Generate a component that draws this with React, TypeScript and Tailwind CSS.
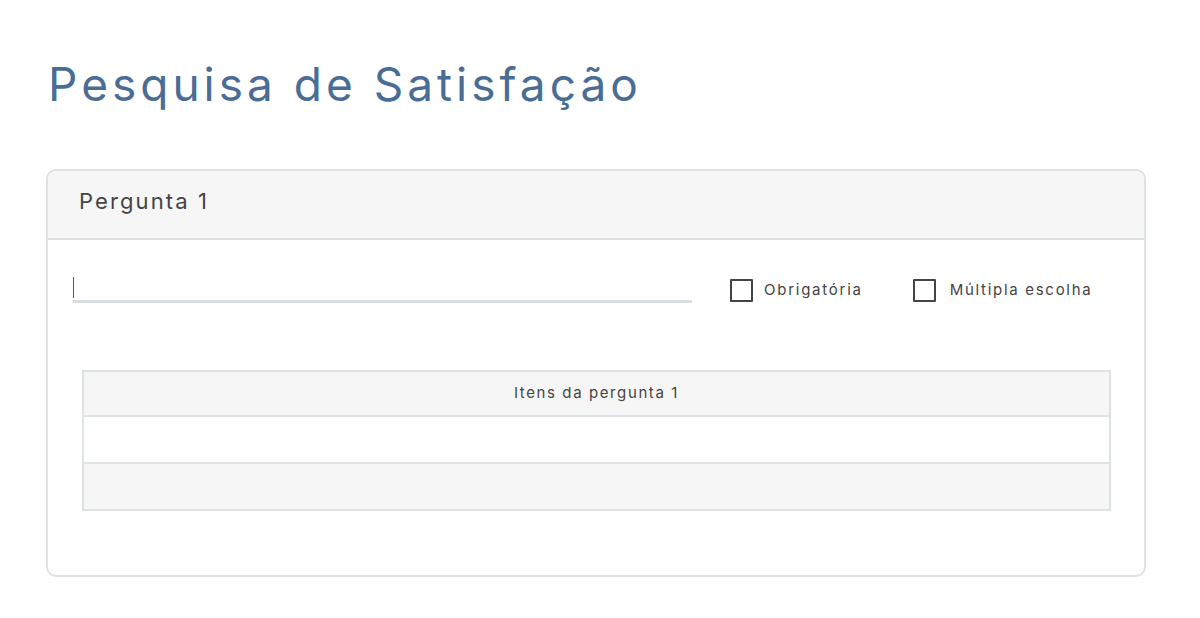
export default function App() {
  return (
    <div className="w-[1200px] h-[618px] bg-white font-['Inter','Noto_Sans',sans-serif] text-[#444]">
      <div className="pl-[48px] pr-[54px] pt-[52px]">
        {/* Title */}
        <h1 className="text-[46px] leading-[64px] text-[#4a6d96] tracking-[4px] font-normal">
          Pesquisa de Satisfação
        </h1>

        {/* Card */}
        <div className="mt-[53px] -ml-[2px] w-[1100px] h-[408px] border-2 border-[#dde2e5] rounded-[10px] overflow-hidden">
          <div className="h-[69px] bg-[#f6f6f6] border-b-2 border-[#dde2e5] flex items-center pl-[31px] pb-[6px]">
            <span className="text-[22px] tracking-[2.1px] text-[#444]">Pergunta 1</span>
          </div>

          <div className="px-[25px] pt-[34px]">
            <div className="flex items-start">
              <div className="w-[619px] h-[29px] border-b-[3px] border-[#d8dfe3] pt-[3px]">
                <div className="w-px h-[21px] bg-[#555]" />
              </div>

              <label className="ml-[38px] flex items-center gap-[11px] mt-[5px]">
                <span className="w-[23px] h-[23px] border-2 border-[#444] rounded-[1px]" />
                <span className="text-[15px] tracking-[1.75px]">Obrigatória</span>
              </label>

              <label className="ml-[50px] flex items-center gap-[14px] mt-[5px]">
                <span className="w-[23px] h-[23px] border-2 border-[#444] rounded-[1px]" />
                <span className="text-[15px] tracking-[1.7px]">Múltipla escolha</span>
              </label>
            </div>

            {/* Items table */}
            <div className="mt-[67px] ml-[9px] w-[1029px] border-2 border-[#dde2e5]">
              <div className="h-[45px] bg-[#f6f6f6] border-b-2 border-[#dde2e5] flex items-center justify-center">
                <span className="text-[15px] tracking-[1.6px]">Itens da pergunta 1</span>
              </div>
              <div className="h-[47px] bg-white border-b-2 border-[#dde2e5]" />
              <div className="h-[45px] bg-[#f6f6f6]" />
            </div>
          </div>
        </div>
      </div>
    </div>
  );
}
